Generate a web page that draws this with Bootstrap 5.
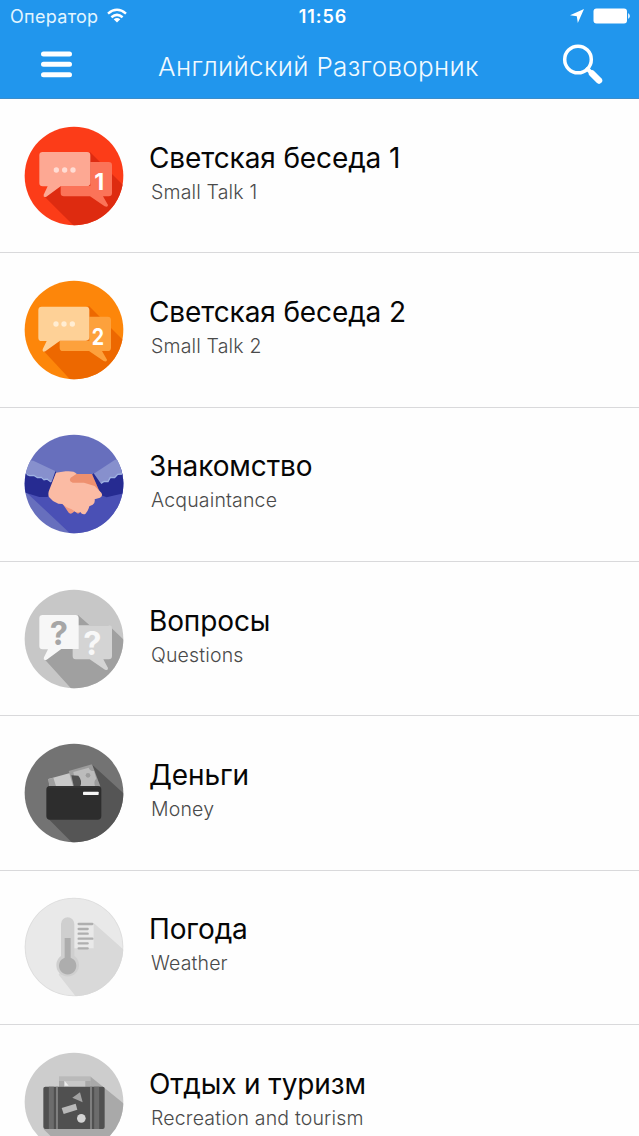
<!DOCTYPE html>
<html lang="ru">
<head>
<meta charset="utf-8">
<meta name="viewport" content="width=device-width, initial-scale=1">
<title>Английский Разговорник</title>
<link href="https://cdn.jsdelivr.net/npm/bootstrap@5.3.0/dist/css/bootstrap.min.css" rel="stylesheet">
<style>
  body { font-family: Inter, "Liberation Sans", sans-serif; height: 1136px; overflow: hidden; background: #fefefe; }
  svg { display: block; flex: none; }
  .app-header { height: 99px; background: #2196ed; border-bottom: 1.5px solid #3b8dcb; }
  .status-bar { height: 32px; display: grid; grid-template-columns: 1fr auto 1fr; padding: 0 8px 0 10px; }
  .carrier { font-size: 18px; letter-spacing: .3px; color: #e2f5ff; }
  .clock { font-size: 18px; font-weight: 600; letter-spacing: .9px; padding-left: 5px; }
  .title-bar { height: 65px; padding: 0 35px 0 39px; }
  .app-title { font-size: 26px; font-weight: 300; letter-spacing: .34px; line-height: 32px; margin-top: 5px; margin-left: 2px; color: #f1faff; }
  .topic { height: 154.33px; border-bottom: 1px solid #d9d9db; padding-left: 14px; }
  .topic-name { font-size: 28px; line-height: 34px; color: #060606; letter-spacing: -.12px; margin-top: -7px; }
  .topic-sub { font-size: 19.5px; line-height: 24px; font-weight: 300; color: #4a4a4a; padding-left: 2px; margin-top: 5px; letter-spacing: .16px; }
  .topic-text { margin-left: 15px; }
</style>
</head>
<body>
<svg width="0" height="0" class="position-absolute" aria-hidden="true">
  <defs>
    <clipPath id="disc"><circle cx="180" cy="180" r="148"/></clipPath>
    <path id="bubbleLeft" d="M86 108H219Q229 108 229 118V200Q229 210 219 210H141L97 242Q87 246 89 236L101 211H86Q76 211 76 201V118Q76 108 86 108Z"/>
    <path id="bubbleRight" d="M229 138H284Q294 138 294 148V231Q294 241 284 241H267L282 267Q282 275 272 271L228 241H150Q140 241 140 231V210H229Z"/>
  </defs>
</svg>

<header class="app-header text-white">
  <div class="status-bar align-items-center">
    <div class="d-flex align-items-center">
      <span class="carrier">Оператор</span>
      <svg class="ms-2" width="22" height="16" viewBox="0 0 22 16" fill="none" stroke="#fff" stroke-width="2.5"><path d="M2 5.6Q11-2 20 5.6"/><path d="M5.4 9.2Q11 4.6 16.6 9.2"/><path d="M7.7 11.2Q11 8.6 14.3 11.2L11 14.5Z" fill="#fff" stroke="none"/></svg>
    </div>
    <span class="clock">11:56</span>
    <div class="d-flex align-items-center justify-content-end">
      <svg width="14" height="14" viewBox="0 0 14 14"><path d="M14 0 7.8 14 6.8 7.2 0 6.2Z" fill="#fff"/></svg>
      <svg width="38" height="16" viewBox="0 0 38 16" style="margin-left:9px"><rect x=".5" y=".5" width="33.5" height="15" rx="3" fill="#fff"/><path d="M35.2 5Q38.5 8 35.2 11Z" fill="#fff"/></svg>
    </div>
  </div>
  <div class="title-bar d-flex align-items-center justify-content-between">
    <svg width="34" height="30" viewBox="0 1 34 30" stroke="#fff" stroke-width="5" stroke-linecap="round"><path d="M4.500 5H30.500M4.500 15.300H30.500M4.500 25.700H30.500"/></svg>
    <h1 class="app-title mb-0">Английский Разговорник</h1>
    <svg width="42" height="42" viewBox="0 1 42 42" fill="none" stroke="#fff" stroke-linecap="round"><circle cx="16" cy="16.500" r="13.300" stroke-width="3.500"/><path d="M25.500 26 28 28.500" stroke-width="4"/><path d="M30 30.500 37 37.500" stroke-width="6.500"/></svg>
  </div>
</header>

<main class="d-flex flex-column">
  <section class="topic d-flex align-items-center flex-shrink-0">
    <svg width="120" height="120" viewBox="0 0 360 360">
      <g clip-path="url(#disc)"><rect width="360" height="360" fill="#fc3c18"/><path d="M228 108 400 280V360H210L89 239 140 180Z" fill="#de2b10"/></g>
      <use href="#bubbleRight" fill="#fb7358"/><use href="#bubbleLeft" fill="#fda893"/>
      <g fill="#ffdcd4"><circle cx="127" cy="162" r="8"/><circle cx="152" cy="162" r="8"/><circle cx="177" cy="162" r="8"/></g>
      <text x="256" y="222" text-anchor="middle" font-size="69" font-weight="700" fill="#fff">1</text>
    </svg>
    <div class="topic-text"><div class="topic-name">Светская беседа 1</div><div class="topic-sub">Small Talk 1</div></div>
  </section>

  <section class="topic d-flex align-items-center flex-shrink-0">
    <svg width="120" height="120" viewBox="0 0 360 360">
      <g clip-path="url(#disc)"><rect width="360" height="360" fill="#fd860a"/><path d="M225 108 400 283V360H198L87 241 140 180Z" fill="#ed6800"/></g>
      <g transform="translate(-3 2)"><use href="#bubbleRight" fill="#fda13c"/><use href="#bubbleLeft" fill="#fed197"/></g>
      <g fill="#ffedd3"><circle cx="126" cy="162" r="8"/><circle cx="150" cy="162" r="8"/><circle cx="175" cy="162" r="8"/></g>
      <text x="252" y="225" text-anchor="middle" font-size="69" font-weight="700" fill="#fff" textLength="37" lengthAdjust="spacingAndGlyphs">2</text>
    </svg>
    <div class="topic-text"><div class="topic-name">Светская беседа 2</div><div class="topic-sub">Small Talk 2</div></div>
  </section>

  <section class="topic d-flex align-items-center flex-shrink-0">
    <svg width="120" height="120" viewBox="0 0 360 360">
      <g clip-path="url(#disc)">
        <rect width="360" height="360" fill="#676fbd"/>
        <path d="M35 203 360 120V360H202Z" fill="#4a50b5"/>
        <path d="M20 106 58 110 125 142 112 181 20 157Z" fill="#8790cd"/>
        <path d="M20 148 38 150 47 154 60 153 70 160 82 159 90 166 99 164 113 174 124 142 127 144 101 219 76 219 20 202Z" fill="#262b91"/>
        <path d="M38 151 47 155 60 154 70 161 82 160 90 167 99 165 111 174" fill="none" stroke="#9fb2e2" stroke-width="4"/>
        <path d="M340 95 302 108 237 151 260 182 340 158Z" fill="#8790cd"/>
        <path d="M234 152 239 148 260 178 270 172 282 173 289 160 302 161 311 151 340 149V205L303 214 278 220 262 214Z" fill="#262b91"/>
        <path d="M261 178 270 172 282 173 289 160 302 161 311 151 325 150" fill="none" stroke="#9fb2e2" stroke-width="4"/>
      </g>
      <path d="M165 150H234L262 215 246 222 165 185Z" fill="#ee906f"/>
      <path d="M146 240 160 260Q166 272 174 268L182 262 192 269 203 262 190 240Z" fill="#f39b80"/>
      <path d="M126 146 155 142Q180 140 188 149L170 161Q163 173 176 176L210 176 242 186 262 206Q268 216 258 221L242 226Q244 237 236 242L226 247Q222 262 214 270Q204 273 199 264L186 265 173 256 158 250 145 240 133 239 117 231 105 219Q101 207 106 197Z" fill="#fbbba4"/>
    </svg>
    <div class="topic-text"><div class="topic-name">Знакомство</div><div class="topic-sub">Acquaintance</div></div>
  </section>

  <section class="topic d-flex align-items-center flex-shrink-0">
    <svg width="120" height="120" viewBox="0 0 360 360">
      <g clip-path="url(#disc)"><rect width="360" height="360" fill="#c7c7c7"/><path d="M192 108 226 138H283L360 212V360H200L91 240 140 180Z" fill="#a0a0a0"/></g>
      <path d="M185 139H285Q294 139 294 149V231Q294 241 284 241H268L282 267Q283 276 273 272L227 241H185Q176 241 176 231V149Q176 139 185 139Z" fill="#d4d4d4"/>
      <path d="M86 108H184Q194 108 194 118V210H142L98 242Q87 246 90 235L102 211H86Q76 211 76 201V118Q76 108 86 108Z" fill="#f7f7f7"/>
      <text x="135" y="197" text-anchor="middle" font-size="98" font-weight="700" fill="#a6a6a6">?</text>
      <text x="235" y="228" text-anchor="middle" font-size="98" font-weight="700" fill="#f8f8f8">?</text>
    </svg>
    <div class="topic-text"><div class="topic-name">Вопросы</div><div class="topic-sub">Questions</div></div>
  </section>

  <section class="topic d-flex align-items-center flex-shrink-0">
    <svg width="120" height="120" viewBox="0 0 360 360">
      <g clip-path="url(#disc)"><rect width="360" height="360" fill="#737373"/><path d="M233 94 360 210V360H205L103 257 180 170Z" fill="#555"/></g>
      <path d="M103 138 171 119 190 170H108Z" fill="#c9c9c9"/><path d="M103 138 118 134 126 160H106Z" fill="#9f9f9f"/>
      <path d="M164 114 234 94 259 160 180 169Z" fill="#9c9c9c"/><path d="M178 117 224 104Q228 115 240 114L247 137Q238 143 243 160H186Z" fill="#bcbcbc"/>
      <path d="M172 127 193 128Q207 144 198 162H180Z" fill="#505050"/><circle cx="222" cy="127" r="7" fill="#9c9c9c"/>
      <rect x="97" y="159" width="165" height="101" rx="11" fill="#2d2d2d"/><path d="M104 162H254" stroke="#3b3b3b" stroke-width="3"/>
      <rect x="207" y="176" width="47" height="10" rx="2" fill="#f5f5f5"/>
    </svg>
    <div class="topic-text"><div class="topic-name">Деньги</div><div class="topic-sub">Money</div></div>
  </section>

  <section class="topic d-flex align-items-center flex-shrink-0">
    <svg width="120" height="120" viewBox="0 0 360 360">
      <g clip-path="url(#disc)"><rect width="360" height="360" fill="#e9e9e9"/><path d="M239 108 360 216V360H210L134 263 180 184H239Z" fill="#d9d9d9"/><circle cx="180" cy="180" r="147" fill="none" stroke="#d8d8d8" stroke-width="2"/></g>
      <path d="M141 111A20 20 0 0 1 181 111V207A34 34 0 1 1 141 207Z" fill="#cfcfcf"/>
      <path d="M152 153H170V212A26 26 0 1 1 152 212Z" fill="#adadad"/>
      <path d="M194 111H235M194 126H221M194 140H221M194 155H235M194 169H221M194 184H221" stroke="#afafaf" stroke-width="7" stroke-linecap="round"/>
    </svg>
    <div class="topic-text"><div class="topic-name">Погода</div><div class="topic-sub">Weather</div></div>
  </section>

  <section class="topic d-flex align-items-center flex-shrink-0">
    <svg width="120" height="120" viewBox="0 0 360 360">
      <g clip-path="url(#disc)"><rect width="360" height="360" fill="#cdcdcd"/><path d="M230 104 360 210V360H190L89 262 180 150Z" fill="#a9a9a9"/></g>
      <path d="M135 103H230V140H135Z" fill="#bababa"/><path d="M150 117H215V140H150Z" fill="#c7c7c7"/><path d="M152 117 164 131H152Z" fill="#eee"/>
      <path d="M135 117H150V134H135ZM214 117H230V134H214Z" fill="#a9a9a9"/>
      <rect x="88" y="134" width="184" height="127" rx="6" fill="#505050"/>
      <path d="M112 134V261M248 134V261" stroke="#6c6c6c" stroke-width="15"/><path d="M129 134V261M231 134V261" stroke="#888" stroke-width="5"/>
      <path d="M198 151 206 181 175 167Z" fill="#a2a2a2"/><path d="M143 198 185 185 190 203 149 216Z" fill="#b8b8b8"/><circle cx="202" cy="229" r="13" fill="#d4d4d4"/>
    </svg>
    <div class="topic-text"><div class="topic-name">Отдых и туризм</div><div class="topic-sub">Recreation and tourism</div></div>
  </section>
</main>
<script src="https://cdn.jsdelivr.net/npm/bootstrap@5.3.0/dist/js/bootstrap.bundle.min.js"></script>
</body>
</html>
